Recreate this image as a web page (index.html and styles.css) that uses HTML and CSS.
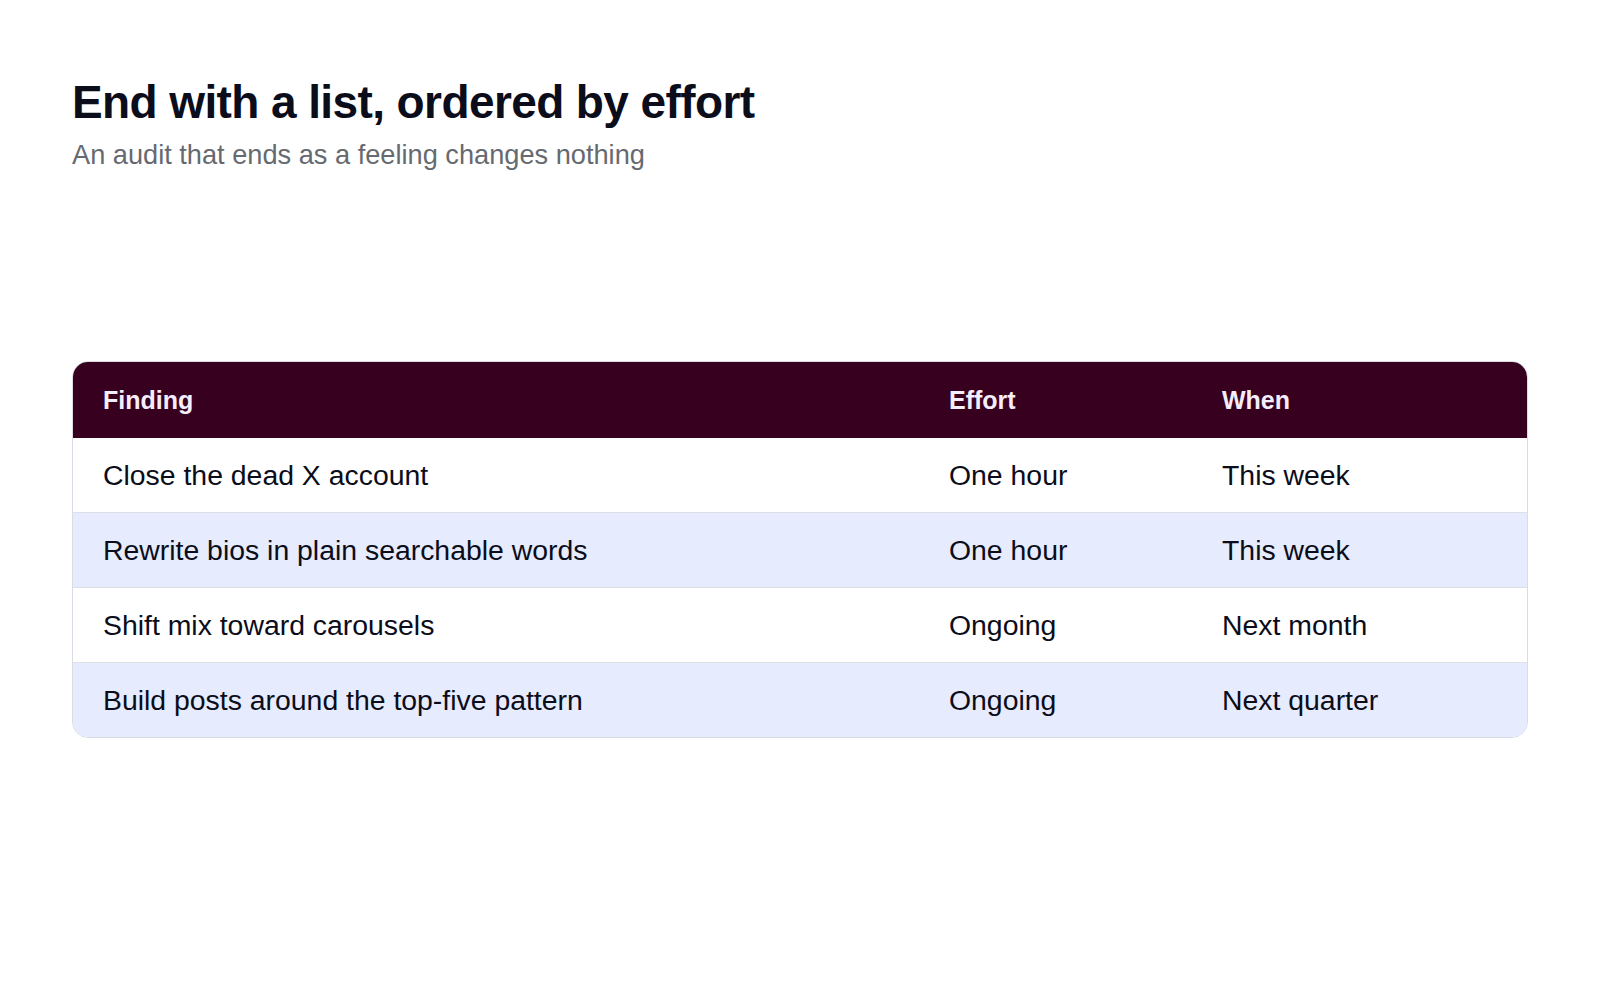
FILE: index.html
```html
<!DOCTYPE html>
<html lang="en">
<head>
<meta charset="utf-8">
<title>End with a list, ordered by effort</title>
<link rel="stylesheet" href="styles.css">
</head>
<body>
<main class="slide">
  <header class="slide-head">
    <h1 class="title">End with a list, ordered by effort</h1>
    <p class="subtitle">An audit that ends as a feeling changes nothing</p>
  </header>
  <div class="table-wrap">
    <table class="plan">
      <thead>
        <tr>
          <th class="col-finding">Finding</th>
          <th class="col-effort">Effort</th>
          <th class="col-when">When</th>
        </tr>
      </thead>
      <tbody>
        <tr><td>Close the dead X account</td><td>One hour</td><td>This week</td></tr>
        <tr><td>Rewrite bios in plain searchable words</td><td>One hour</td><td>This week</td></tr>
        <tr><td>Shift mix toward carousels</td><td>Ongoing</td><td>Next month</td></tr>
        <tr><td>Build posts around the top-five pattern</td><td>Ongoing</td><td>Next quarter</td></tr>
      </tbody>
    </table>
  </div>
</main>
</body>
</html>
```
FILE: styles.css
```css
* { box-sizing: border-box; }
html, body {
  margin: 0;
  padding: 0;
  background: #ffffff;
}
body {
  font-family: "Liberation Sans", Arial, Helvetica, sans-serif;
  color: #0b0d1a;
}
.slide {
  width: 1600px;
  height: 1000px;
  padding: 74px 72px 0 72px;
}
.slide-head {
  display: flex;
  flex-direction: column;
  gap: 8px;
}
.title {
  margin: 0;
  font-size: 46px;
  line-height: 56px;
  font-weight: 700;
  letter-spacing: -0.6px;
  color: #0b0d1a;
}
.subtitle {
  margin: 0;
  font-size: 27.2px;
  line-height: 34px;
  color: #666a70;
}
.table-wrap {
  margin-top: 189px;
  border: 1px solid #d9dce4;
  border-radius: 16px;
  overflow: hidden;
}
.plan {
  width: 100%;
  border-collapse: collapse;
  table-layout: fixed;
}
.col-finding { width: 846px; }
.col-effort { width: 273px; }
.plan th {
  background: #38001f;
  color: #f4eefc;
  text-align: left;
  font-size: 25px;
  font-weight: 700;
  line-height: 30px;
  padding: 23px 30px;
}
.plan td {
  font-size: 28.4px;
  line-height: 34px;
  padding: 20px 30px;
  color: #0b0d1a;
  border-bottom: 1px solid #dcdfe6;
}
.plan tbody tr:last-child td { border-bottom: none; }
.plan tbody tr:nth-child(even) td { background: #e6ebfd; }
```
